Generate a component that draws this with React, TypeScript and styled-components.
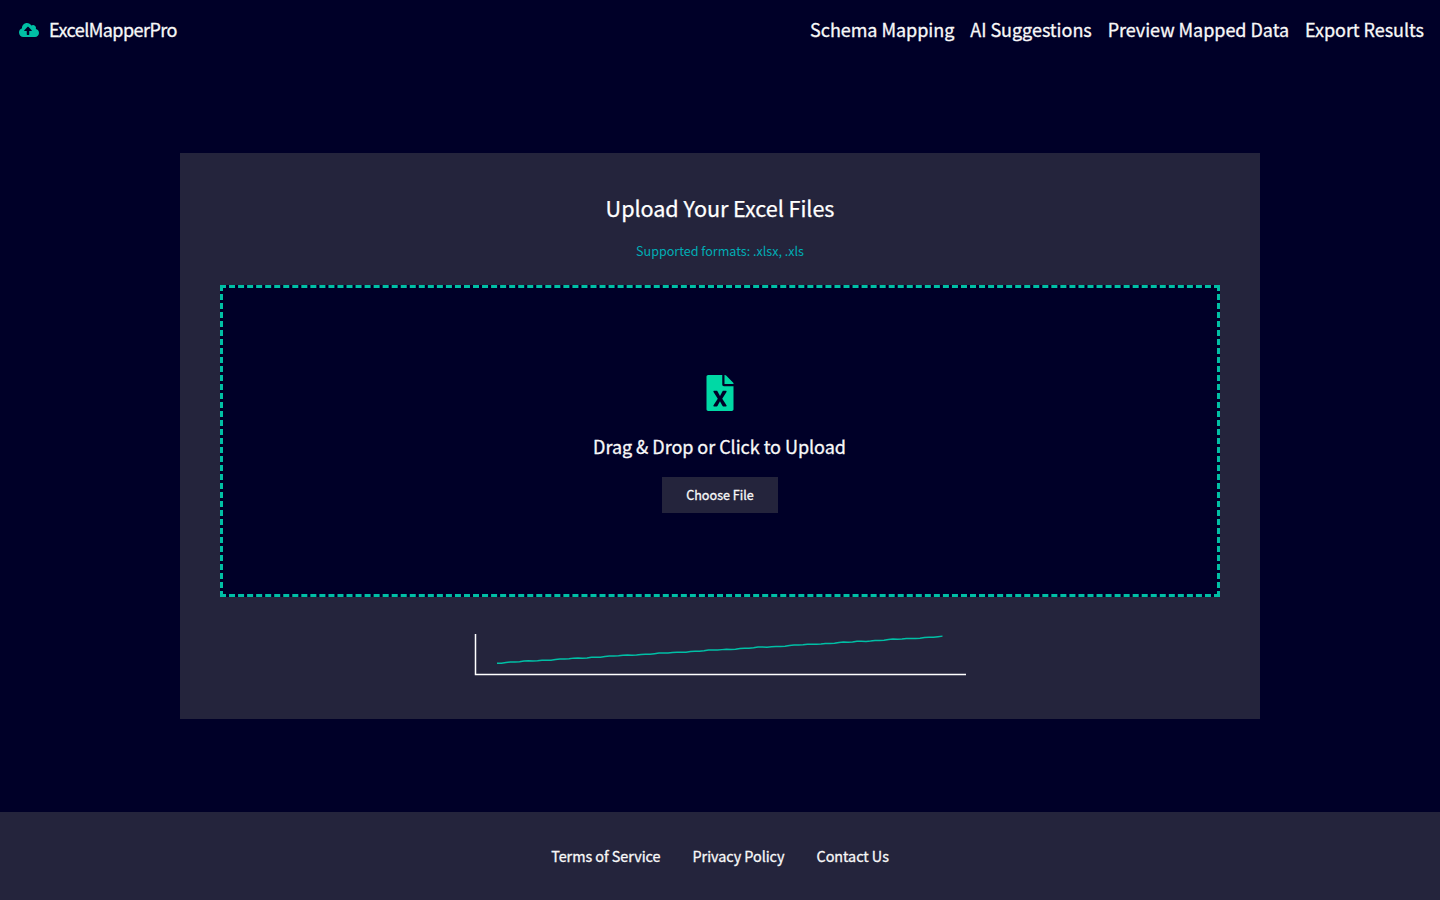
import React from "react";
import styled, { createGlobalStyle } from "styled-components";
import { FaCloudUploadAlt, FaFileExcel } from "react-icons/fa";

const navy = "#000028";
const panel = "#24243c";
const teal = "#00bfa5";

const GlobalStyle = createGlobalStyle`
  * { box-sizing: border-box; }
  body {
    margin: 0;
    background: ${navy};
    color: #f8f8f8;
    font-family: "Noto Sans CJK SC", "Noto Sans", sans-serif;
    font-weight: 400;
  }
`;

const Page = styled.div`
  display: flex;
  flex-direction: column;
  height: 100vh;
`;

const Header = styled.header`
  display: flex;
  align-items: center;
  justify-content: space-between;
  height: 60px;
  padding: 0 16px;
  font-size: 18px;
  line-height: 28px;
  -webkit-text-stroke: 0.3px;
`;

const Brand = styled.div`
  display: flex;
  align-items: center;
  gap: 10px;
  padding-left: 3px;
  letter-spacing: -0.55px;

  svg { color: ${teal}; }
  span { padding-bottom: 2px; }
`;

const Nav = styled.nav`
  display: flex;
  gap: 16px;
  padding-bottom: 2px;
`;

const NavLink = styled.a`
  letter-spacing: -0.04px;
  color: inherit;
  white-space: nowrap;
`;

const Main = styled.main`
  display: flex;
  flex: 1;
  align-items: center;
  justify-content: center;
`;

const Card = styled.section`
  display: flex;
  flex-direction: column;
  align-items: center;
  width: 1080px;
  height: 566px;
  padding: 37px 40px 40px;
  background: ${panel};
`;

const Title = styled.h1`
  margin: 0;
  font-size: 21.6px;
  font-weight: 400;
  line-height: 36px;
  letter-spacing: -0.05px;
  color: #fff;
  -webkit-text-stroke: 0.25px;
`;

const Hint = styled.p`
  margin: 15px 0 0;
  font-size: 12.6px;
  line-height: 20px;
  letter-spacing: -0.02px;
  color: #00adb5;
`;

const DropZone = styled.div`
  display: flex;
  flex-direction: column;
  align-items: center;
  width: 100%;
  height: 312px;
  margin-top: 24px;
  padding-top: 87px;
  border: 3px dashed ${teal};
  background: ${navy};

  svg { color: #00d9a5; }
`;

const DropLabel = styled.p`
  margin: 20px 1px 0 0;
  font-size: 18px;
  line-height: 30px;
  letter-spacing: -0.04px;
  -webkit-text-stroke: 0.3px;
`;

const ChooseButton = styled.button`
  width: 116px;
  height: 36px;
  margin-top: 16px;
  padding: 0 0 2px;
  border: 0;
  background: ${panel};
  color: inherit;
  font: inherit;
  font-size: 12.6px;
  -webkit-text-stroke: 0.3px;
`;

const Chart = styled.svg`
  width: 500px;
  height: 50px;
  margin-top: 32px;
`;

const Footer = styled.footer`
  display: flex;
  justify-content: center;
  gap: 32px;
  height: 88px;
  padding: 32px 0 0;
  background: ${panel};
  line-height: 24px;
`;

const FooterLink = styled.a`
  font-size: 14.4px;
  letter-spacing: -0.04px;
  color: inherit;
  -webkit-text-stroke: 0.3px;
`;

const navItems = ["Schema Mapping", "AI Suggestions", "Preview Mapped Data", "Export Results"];
const footerItems = ["Terms of Service", "Privacy Policy", "Contact Us"];

const trend = Array.from({ length: 100 }, (_, i) => {
  const wobble = 0.25 * Math.sin(i * 1.7) + 0.2 * Math.sin(i * 0.61 + 1);
  return `${27 + i * 4.5},${34 - i * 0.267 + wobble}`;
}).join(" ");

export default function App() {
  return (
    <Page>
      <GlobalStyle />
      <Header>
        <Brand>
          <FaCloudUploadAlt size={20} />
          <span>ExcelMapperPro</span>
        </Brand>
        <Nav>{navItems.map((t) => <NavLink key={t}>{t}</NavLink>)}</Nav>
      </Header>
      <Main>
        <Card>
          <Title>Upload Your Excel Files</Title>
          <Hint>Supported formats: .xlsx, .xls</Hint>
          <DropZone>
            <FaFileExcel size={36} />
            <DropLabel>Drag &amp; Drop or Click to Upload</DropLabel>
            <ChooseButton>Choose File</ChooseButton>
          </DropZone>
          <Chart viewBox="0 0 500 50" fill="none" strokeWidth="1.5">
            <path d="M5.5 5V45.5H496" stroke="#fff" />
            <polyline points={trend} stroke={teal} />
          </Chart>
        </Card>
      </Main>
      <Footer>{footerItems.map((t) => <FooterLink key={t}>{t}</FooterLink>)}</Footer>
    </Page>
  );
}
